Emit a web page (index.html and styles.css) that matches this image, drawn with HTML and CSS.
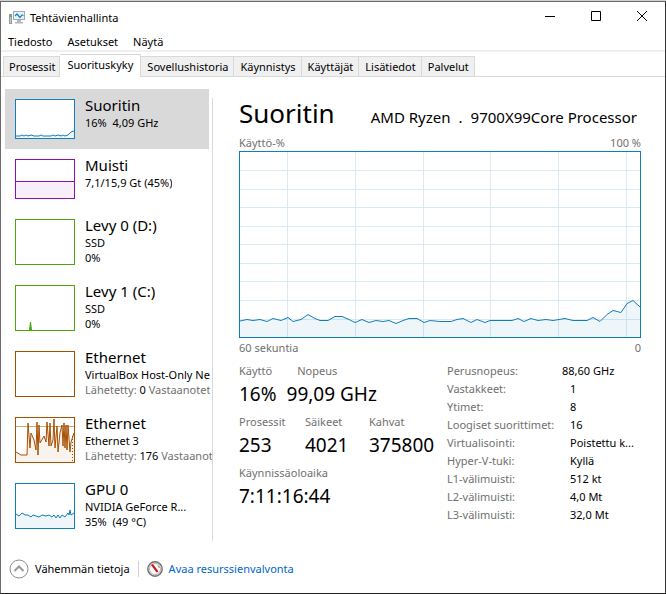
FILE: index.html
```html
<!DOCTYPE html>
<html lang="fi">
<head>
<meta charset="utf-8">
<meta name="viewport" content="width=device-width, initial-scale=1">
<title>Tehtävienhallinta</title>
<link rel="stylesheet" href="styles.css">
</head>
<body>
<div class="window">
  <header class="titlebar">
    <svg class="app-icon" width="16" height="16" viewBox="0 0 16 16" aria-hidden="true">
      <rect x="0.5" y="5.500" width="2" height="9" fill="#c9c9c9" stroke="#9a9a9a"/>
      <rect x="1" y="6" width="1.500" height="2" fill="#2fc436"/>
      <rect x="4.500" y="2.500" width="11" height="8" fill="#e2f3fb" stroke="#a4a9ad"/>
      <path d="M6 7 8 5 11 8.500 13 6 14.500 6.500" fill="none" stroke="#1f82b8" stroke-width="1.200"/>
      <path d="M8 11h4v2h2v1.500H6V13h2z" fill="#b4b8bb"/>
    </svg>
    <h1 class="window-title">Tehtävienhallinta</h1>
    <div class="window-controls">
      <button type="button" aria-label="Pienennä"><svg width="12" height="12" viewBox="0 0 12 12"><path d="M1 5.500h10"/></svg></button>
      <button type="button" aria-label="Suurenna"><svg width="12" height="12" viewBox="0 0 12 12"><path d="M1.500 0.500h9v9h-9z"/></svg></button>
      <button type="button" aria-label="Sulje"><svg width="12" height="12" viewBox="0 0 12 12"><path d="M1 0l10 10M11 0 1 10"/></svg></button>
    </div>
  </header>

  <nav class="menu" aria-label="Valikko">
    <button type="button">Tiedosto</button>
    <button type="button">Asetukset</button>
    <button type="button">Näytä</button>
  </nav>

  <div class="tabs" role="tablist">
    <button type="button" role="tab">Prosessit</button>
    <button type="button" role="tab" aria-selected="true" class="active">Suorituskyky</button>
    <button type="button" role="tab">Sovellushistoria</button>
    <button type="button" role="tab">Käynnistys</button>
    <button type="button" role="tab">Käyttäjät</button>
    <button type="button" role="tab">Lisätiedot</button>
    <button type="button" role="tab">Palvelut</button>
  </div>

  <main class="content">
    <div class="sidebar">
      <button type="button" class="resource short selected">
        <svg class="thumb cpu" viewBox="0 0 58 38"><path class="area" d="M0 36H4L6 35 8 36 10 35 12 36 15 35 18 36H23L25 35 27 36H35L37 35 39 36 42 35 45 36 47 35 49 36 52 35 55 32 58 31V38H0z"/><path d="M0 36H4L6 35 8 36 10 35 12 36 15 35 18 36H23L25 35 27 36H35L37 35 39 36 42 35 45 36 47 35 49 36 52 35 55 32 58 31"/></svg>
        <span class="info"><span class="name">Suoritin</span><span class="detail">16%&nbsp; 4,09 GHz</span></span>
      </button>
      <button type="button" class="resource short">
        <svg class="thumb memory" viewBox="0 0 58 38"><path class="area" d="M0 21.500H58V38H0z"/><path d="M0 21.500H58"/></svg>
        <span class="info"><span class="name">Muisti</span><span class="detail">7,1/15,9 Gt (45%)</span></span>
      </button>
      <button type="button" class="resource">
        <svg class="thumb disk" viewBox="0 0 58 44"></svg>
        <span class="info"><span class="name">Levy 0 (D:)</span><span class="detail">SSD</span><span class="detail">0%</span></span>
      </button>
      <button type="button" class="resource">
        <svg class="thumb disk" viewBox="0 0 58 44"><path class="spike" d="M13.500 44 14.500 36 15.500 44"/></svg>
        <span class="info"><span class="name">Levy 1 (C:)</span><span class="detail">SSD</span><span class="detail">0%</span></span>
      </button>
      <button type="button" class="resource">
        <svg class="thumb network" viewBox="0 0 58 44"></svg>
        <span class="info"><span class="name">Ethernet</span><span class="detail">VirtualBox Host-Only Ne</span><span class="detail"><i>Lähetetty:</i> 0 <i>Vastaanotet</i></span></span>
      </button>
      <button type="button" class="resource">
        <svg class="thumb network" viewBox="0 0 58 44"><path class="area" d="M0 34 5 37H11L12 5 14 30 15 15 18 22 20 32 21 4 22 37 23 7 24 25 28 18 30 24 31 4 33 28 34 5 35 28 37 22 38 1 39 30 41 8 42 34 44 15 46 7 47 28 48 5 49 30 50 7 51 32 52 7 54 34 55 24 58 15V44H0z"/><path class="peak" d="M0 8.500H58"/><path d="M0 34 5 37H11L12 5 14 30 15 15 18 22 20 32 21 4 22 37 23 7 24 25 28 18 30 24 31 4 33 28 34 5 35 28 37 22 38 1 39 30 41 8 42 34 44 15 46 7 47 28 48 5 49 30 50 7 51 32 52 7 54 34 55 24 58 15"/><path class="dotted" d="M56.500 18V44"/></svg>
        <span class="info"><span class="name">Ethernet</span><span class="detail">Ethernet 3</span><span class="detail"><i>Lähetetty:</i> 176 <i>Vastaanot</i></span></span>
      </button>
      <button type="button" class="resource">
        <svg class="thumb cpu" viewBox="0 0 58 44"><path class="area" d="M0 30 3 32 6 29 9 31 12 31 15 33 17 31 20 32 23 33 26 31 30 32 33 31 36 33 38 31 40 34 42 31 44 34 46 31 49 33 52 29 53 31 54 26 55 31 58 29V44H0z"/><path d="M0 30 3 32 6 29 9 31 12 31 15 33 17 31 20 32 23 33 26 31 30 32 33 31 36 33 38 31 40 34 42 31 44 34 46 31 49 33 52 29 53 31 54 26 55 31 58 29"/></svg>
        <span class="info"><span class="name">GPU 0</span><span class="detail">NVIDIA GeForce R...</span><span class="detail">35%&nbsp; (49 °C)</span></span>
      </button>
    </div>

    <section class="panel">
      <div class="heading">
        <h2>Suoritin</h2>
        <p class="model"><span>AMD Ryzen</span><span>.</span><span>9700X99Core Processor</span></p>
      </div>
      <div class="scale"><span>Käyttö-%</span><span>100 %</span></div>
      <svg class="graph" viewBox="0 0 400 185" preserveAspectRatio="none" role="img" aria-label="Suorittimen käyttö">
        <path class="grid" d="M47.500 0V185M115.500 0V185M183.500 0V185M250.500 0V185M318.500 0V185M386.500 0V185M0 18.500H400M0 37.500H400M0 55.500H400M0 74.500H400M0 92.500H400M0 111.500H400M0 129.500H400M0 148.500H400M0 167.500H400"/>
        <path class="area" d="M0 169 7 167.500 13 168.500 20 167.500 27 169.500 33 166.500 41 168.500 48 165.500 53 169.500 61 167.500 68 162.500 75 166.500 80 168.500H88L95 164.500H102L109 167.500 115 170.500 122 167.500 129 170.500 136 168.500 143 169.500 149 168.500 156 171.500 163 168.500 169 166.500H177L184 170.500 190 168.500 200 169.500 211 169.500 217 167.500 223 166.500 231 170.500 237 167.500 245 170.500 250 168.500H272L278 166.500 284 169.500 291 166.500 298 168.500 306 167.500 313 168.500 325 166.500 333 168.500H347L353 165.500 360 169.500 367 162.500 373 158.500 381 160.500 387 151.500 393 148.500 400 155V185H0z"/>
        <path class="line" d="M0 169 7 167.500 13 168.500 20 167.500 27 169.500 33 166.500 41 168.500 48 165.500 53 169.500 61 167.500 68 162.500 75 166.500 80 168.500H88L95 164.500H102L109 167.500 115 170.500 122 167.500 129 170.500 136 168.500 143 169.500 149 168.500 156 171.500 163 168.500 169 166.500H177L184 170.500 190 168.500 200 169.500 211 169.500 217 167.500 223 166.500 231 170.500 237 167.500 245 170.500 250 168.500H272L278 166.500 284 169.500 291 166.500 298 168.500 306 167.500 313 168.500 325 166.500 333 168.500H347L353 165.500 360 169.500 367 162.500 373 158.500 381 160.500 387 151.500 393 148.500 400 155"/>
      </svg>
      <div class="scale"><span>60 sekuntia</span><span>0</span></div>

      <div class="stats">
        <div class="live">
          <div class="group">
            <div class="labels usage"><span>Käyttö</span><span>Nopeus</span></div>
            <div class="values usage-values"><span>16%</span><span>99,09 GHz</span></div>
          </div>
          <div class="group">
            <div class="labels counts"><span>Prosessit</span><span>Säikeet</span><span>Kahvat</span></div>
            <div class="values counts"><span>253</span><span>4021</span><span>375800</span></div>
          </div>
          <div class="group">
            <div class="labels"><span>Käynnissäoloaika</span></div>
            <div class="values"><span>7:11:16:44</span></div>
          </div>
        </div>
        <dl class="specs">
          <div class="lead"><dt>Perusnopeus:</dt><dd>88,60 GHz</dd></div>
          <div><dt>Vastakkeet:</dt><dd>1</dd></div>
          <div><dt>Ytimet:</dt><dd>8</dd></div>
          <div><dt>Loogiset suorittimet:</dt><dd>16</dd></div>
          <div><dt>Virtualisointi:</dt><dd>Poistettu k...</dd></div>
          <div><dt>Hyper-V-tuki:</dt><dd>Kyllä</dd></div>
          <div><dt>L1-välimuisti:</dt><dd>512 kt</dd></div>
          <div><dt>L2-välimuisti:</dt><dd>4,0 Mt</dd></div>
          <div><dt>L3-välimuisti:</dt><dd>32,0 Mt</dd></div>
        </dl>
      </div>
    </section>
  </main>

  <footer class="footer">
    <button type="button" class="fewer">
      <svg width="20" height="20" viewBox="0 0 20 20" aria-hidden="true"><circle cx="10" cy="10" r="9" fill="#fff" stroke="#8c8c8c"/><path d="M5.500 12 10 7.500 14.500 12" fill="none" stroke="#999" stroke-width="2"/></svg>
      <span>Vähemmän tietoja</span>
    </button>
    <a class="monitor" href="#">
      <svg width="16" height="16" viewBox="0 0 16 16" aria-hidden="true"><circle cx="8" cy="8" r="7.200" fill="#e9e9e9" stroke="#707070" stroke-width="1.400"/><circle cx="8" cy="8" r="5.500" fill="#fff" stroke="#b5b5b5"/><path d="M4 4 9.500 11.500 11.500 10.500 6 3z" fill="#d4141c"/><path d="M11 4.500 12.500 7" stroke="#888"/></svg>
      <span>Avaa resurssienvalvonta</span>
    </a>
  </footer>
</div>
</body>
</html>
```
FILE: styles.css
```css
* { box-sizing: border-box; }

body {
  margin: 0;
  padding-top: 1px;
  background: #d0d0d0;
  color: #000;
  font: 11px/15px "Noto Sans", "Open Sans", sans-serif;
}

h1, h2, p, dl, dd { margin: 0; font-weight: 400; }

i { font-style: normal; color: #707070; }

button {
  margin: 0;
  padding: 0;
  border: 0;
  background: none;
  color: inherit;
  font: inherit;
  white-space: nowrap;
}

.window {
  display: flex;
  flex-direction: column;
  min-height: calc(100vh - 1px);
  background: #fff;
  border: 1px solid #6b6b6b;
  border-right-color: #333;
  border-bottom-color: #222;
}

.titlebar {
  display: flex;
  align-items: center;
  height: 30px;
  padding-left: 8px;
}

.window-title {
  flex: 1;
  margin-left: 5px;
  font-size: 11px;
}

.window-controls { display: flex; }

.window-controls button {
  display: flex;
  align-items: center;
  justify-content: center;
  width: 46px;
  height: 30px;
}

.window-controls path { fill: none; stroke: #000; }

.menu {
  display: flex;
  gap: 15px;
  height: 20px;
  padding-left: 7px;
  border-bottom: 2px solid #f0f0f0;
}

.tabs {
  display: flex;
  align-items: flex-end;
  height: 25px;
  padding-left: 2px;
  border-bottom: 1px solid #d9d9d9;
}

.tabs button {
  height: 20px;
  padding: 0 5px 0 6px;
  background: #f0f0f0;
  border: 1px solid #d9d9d9;
  border-width: 1px 1px 0 0;
}

.tabs button:first-child {
  padding: 0 4px 0 5px;
  border-left-width: 1px;
}

.tabs .active {
  height: 23px;
  margin-bottom: -1px;
  padding: 0 7px 3px;
  background: #fff;
}

.content {
  display: flex;
  flex: 1;
  padding: 12px 24px 0 4px;
}

.sidebar {
  flex: 0 0 208px;
  min-width: 0;
  align-self: flex-start;
  padding: 0 1px 2px 0;
  background: linear-gradient(#d9d9d9, #d9d9d9) right 0 top 9px / 1px 100% no-repeat;
}

.resource {
  display: flex;
  gap: 10px;
  width: 100%;
  height: 66px;
  padding: 10px 0 0 10px;
  overflow: hidden;
  text-align: left;
}

.resource.short { height: 60px; }

.resource.selected {
  width: 204px;
  background: #d9d9d9;
}

.thumb {
  flex: 0 0 60px;
  height: 46px;
  border: 1px solid currentColor;
  background: #fff;
}

.short .thumb { height: 40px; }

.thumb path { fill: none; stroke: currentColor; }

.thumb .spike { fill: currentColor; }

.thumb .area,
.graph .area { fill: currentColor; fill-opacity: 0.07; stroke: none; }

.thumb .peak { opacity: 0.5; }

.thumb .dotted { stroke-dasharray: 1 2; }

.cpu, .graph { color: #117dbb; }
.memory { color: #8b12ae; }
.disk { color: #4da60c; }
.network { color: #a74f01; }

.info {
  display: flex;
  flex-direction: column;
  margin-top: -4px;
  min-width: 0;
  overflow: hidden;
}

.name {
  font-size: 15px;
  line-height: 20px;
}

.detail { white-space: nowrap; }

.panel {
  flex: 1;
  min-width: 0;
  padding-left: 26px;
}

.heading {
  display: flex;
  align-items: baseline;
  justify-content: space-between;
  height: 46px;
  padding: 6px 4px 0 0;
}

.heading h2 {
  font-size: 26px;
  line-height: 36px;
}

.model {
  display: flex;
  gap: 8px;
  font-size: 15px;
  line-height: 20px;
  white-space: nowrap;
}

.scale {
  display: flex;
  justify-content: space-between;
  height: 16px;
  color: #707070;
}

.graph {
  display: block;
  width: 100%;
  height: 187px;
  border: 1px solid currentColor;
}

.graph .grid { fill: none; stroke: #d9eaf4; }

.graph .line { fill: none; stroke: currentColor; }

.graph + .scale { padding-top: 2px; }

.stats {
  display: flex;
  justify-content: space-between;
  padding-top: 8px;
}

.group { margin-bottom: 5px; }

.labels { color: #707070; line-height: 18px; }

.values {
  font-size: 19px;
  line-height: 28px;
}

.usage, .usage-values { display: flex; }
.usage { gap: 25px; }
.usage-values { gap: 10px; }

.counts {
  display: grid;
  grid-template-columns: 66px 64px 66px;
}

.specs { width: 194px; line-height: 18px; }

.specs div {
  display: grid;
  grid-template-columns: 123px 1fr;
  white-space: nowrap;
}

.specs .lead { grid-template-columns: 115px 1fr; }

.specs dt { color: #707070; }

.footer {
  display: flex;
  align-items: center;
  height: 49px;
  padding: 0 8px;
}

.fewer, .monitor {
  display: flex;
  align-items: center;
  gap: 6px;
}

.monitor {
  margin-left: 8px;
  padding-left: 8px;
  border-left: 1px solid #d0d0d0;
  color: #0066cc;
  text-decoration: none;
}
```
